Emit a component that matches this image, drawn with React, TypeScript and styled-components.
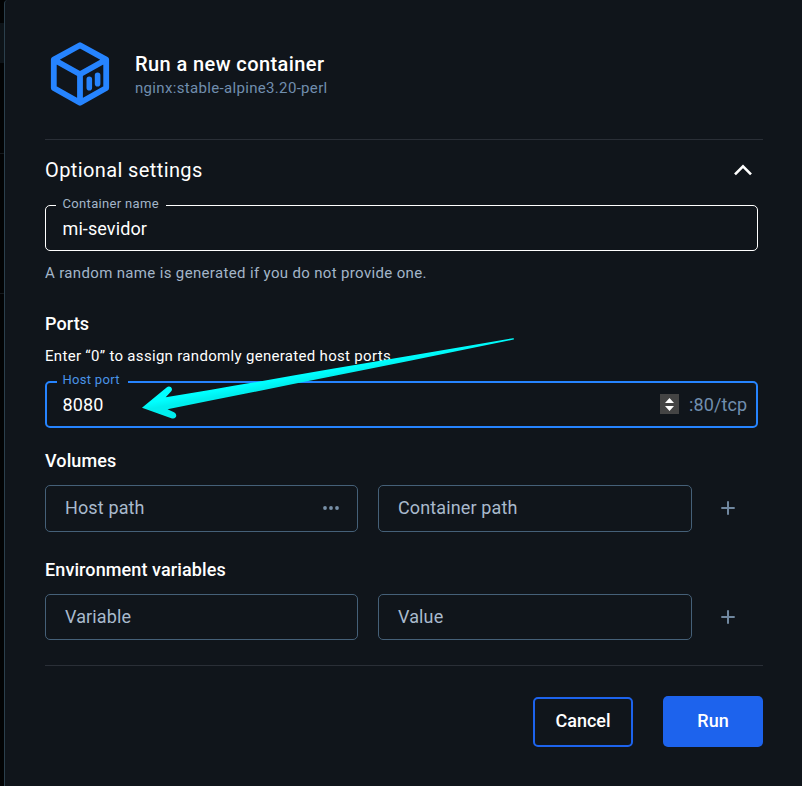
import React from "react";
import styled, { createGlobalStyle } from "styled-components";

const GlobalStyle = createGlobalStyle`
  * { box-sizing: border-box; }
  body { margin: 0; background: #000; overflow: hidden; }
  button, input { font: inherit; letter-spacing: inherit; }
`;

const Screen = styled.div`
  display: flex;
  width: 802px;
  height: 786px;
  background: #020304;
  font-family: Roboto, "Liberation Sans", sans-serif;
  color: #fff;
`;

const Backdrop = styled.div`
  width: 4px;
  padding-top: 23px;
`;

const BackdropRow = styled.div`
  height: 40px;
  background: #0d1318;
`;

const BackdropLine = styled.div<{ $gap: number }>`
  height: 1px;
  margin-top: ${(p) => p.$gap}px;
  background: #14181c;
`;

const Dialog = styled.main`
  position: relative;
  flex: 1;
  padding: 0 39px 0 40px;
  border-left: 1px solid #2b3f4c;
  border-top-left-radius: 4px;
  background: #10151b;
`;

const Header = styled.header`
  display: flex;
  height: 140px;
  padding-top: 39px;
  border-bottom: 1px solid #2a2f37;
`;

const LogoIcon = styled.svg`
  width: 70px;
  height: 70px;
  flex: none;
`;

const HeaderText = styled.div`
  padding: 12px 0 0 20px;
`;

const Title = styled.h1`
  margin: 0;
  font-size: 20px;
  font-weight: 500;
  line-height: 26px;
  letter-spacing: 0.41px;
`;

const Subtitle = styled.div`
  font-size: 15px;
  line-height: 22px;
  letter-spacing: 0.33px;
  color: #708eae;
`;

const SettingsToggle = styled.button`
  display: flex;
  align-items: center;
  justify-content: space-between;
  width: 100%;
  height: 65px;
  padding: 0 10px 5px 0;
  border: 0;
  background: none;
  color: #fff;
  font-size: 20px;
  letter-spacing: 0.39px;
`;

const Field = styled.label<{ $focused?: boolean }>`
  position: relative;
  display: flex;
  align-items: center;
  width: 713px;
  height: ${(p) => (p.$focused ? 47 : 46)}px;
  padding: ${(p) => (p.$focused ? "0 9px 0 15.5px" : "1px 16px 0 16.5px")};
  border: ${(p) => (p.$focused ? "2px solid #2684ff" : "1px solid #fff")};
  border-radius: 5px;
  font-size: 18px;
  letter-spacing: 0.1px;
`;

const FieldLabel = styled.span<{ $focused?: boolean }>`
  position: absolute;
  top: ${(p) => (p.$focused ? -12 : -11)}px;
  left: 10px;
  padding: ${(p) => (p.$focused ? "0 8px 0 5.5px" : "0 7px 0 6.5px")};
  background: #10151b;
  font-size: 13px;
  line-height: 18px;
  letter-spacing: ${(p) => (p.$focused ? 0.3 : 0.33)}px;
  color: ${(p) => (p.$focused ? "#4a94e8" : "#a3b5c9")};
`;

const FieldInput = styled.input`
  flex: 1;
  min-width: 0;
  padding: 0;
  border: 0;
  outline: 0;
  background: none;
  color: #fff;
`;

const Stepper = styled.span`
  display: flex;
  flex-direction: column;
  align-items: center;
  justify-content: center;
  width: 19px;
  height: 20px;
  margin: 0 10px 1px 0;
  background: #444;
`;

const PortSuffix = styled.span`
  width: 58px;
  letter-spacing: 0.1px;
  font-size: 18px;
  color: #708eae;
`;

const Helper = styled.p`
  margin: 13px 0 0;
  font-size: 15px;
  line-height: 18px;
  letter-spacing: 0.345px;
  color: #a3b5c9;
`;

const SectionTitle = styled.h2<{ $gap: number }>`
  margin: ${(p) => p.$gap}px 0 0;
  font-size: 18px;
  font-weight: 500;
  line-height: 22px;
  letter-spacing: 0.1px;
`;

const Hint = styled.p`
  margin: 12px 0 16px;
  font-size: 15px;
  line-height: 18px;
  letter-spacing: 0.31px;
`;

const PairRow = styled.div<{ $height: number }>`
  display: grid;
  grid-template-columns: 313px 314px 31px;
  column-gap: 20px;
  height: ${(p) => p.$height}px;
  margin-top: 13px;
`;

const PairField = styled.div`
  display: flex;
  align-items: center;
  justify-content: space-between;
  padding: 0 17px 2px 19px;
  border: 1px solid #456078;
  border-radius: 5px;
  font-size: 18px;
  letter-spacing: 0.13px;
  color: #a9bacd;
`;

const AddButton = styled.button`
  display: flex;
  align-items: center;
  justify-content: center;
  padding: 0 0 1px;
  border: 0;
  background: none;
`;

const Footer = styled.footer`
  display: flex;
  justify-content: flex-end;
  align-items: flex-end;
  gap: 30px;
  height: 82px;
  margin-top: 25px;
  border-top: 1px solid #2a2f37;
`;

const ActionButton = styled.button<{ $primary?: boolean }>`
  width: 100px;
  height: ${(p) => (p.$primary ? 51 : 50)}px;
  padding: 0 0 ${(p) => (p.$primary ? 3 : 4)}px;
  border: ${(p) => (p.$primary ? "0" : "2px solid #1d63ed")};
  border-radius: 5px;
  background: ${(p) => (p.$primary ? "#1d63ed" : "transparent")};
  color: #fff;
  font-size: 18px;
  font-weight: 500;
`;

const Pointer = styled.svg`
  position: absolute;
  top: 330px;
  left: 130px;
  width: 390px;
  height: 96px;
  pointer-events: none;
`;

const ContainerLogo = () => (
  <LogoIcon viewBox="0 0 70 70" fill="none" stroke="#2684ff" strokeLinejoin="round" strokeLinecap="round">
    <path strokeWidth="5.8" d="M35 6.2 61.2 20.6V48.9L35 63.8 8.8 48.9V20.6ZM9 20.8 35 35.2 61 20.8M35 35.2V63" />
    <path strokeWidth="5.6" d="M44.3 40.2V48.8M52.6 36.2V44.8" />
  </LogoIcon>
);

const ChevronUp = () => (
  <svg width="20" height="14" viewBox="0 0 20 14" fill="none" stroke="#fff" strokeWidth="2.6">
    <path d="M2 11.4 10 3.3 18 11.4" />
  </svg>
);

const Plus = () => (
  <svg width="14" height="14" viewBox="0 0 14 14" stroke="#70879f" strokeWidth="2">
    <path d="M7 0.3V13.7M0.3 7H13.7" />
  </svg>
);

const Ellipsis = () => (
  <svg width="18" height="6" viewBox="0 0 18 6" fill="#7890a8">
    <circle cx="3" cy="3" r="1.9" />
    <circle cx="9" cy="3" r="1.9" />
    <circle cx="15" cy="3" r="1.9" />
  </svg>
);

const StepArrows = () => (
  <svg width="19" height="20" viewBox="0 0 19 20" fill="#fff">
    <path d="M5 9 9.5 4 14 9ZM5 12H14L9.5 17Z" />
  </svg>
);

function PairSection({ height, names, browse }: { height: number; names: [string, string]; browse?: boolean }) {
  return (
    <PairRow $height={height}>
      <PairField>
        {names[0]}
        {browse && <Ellipsis />}
      </PairField>
      <PairField>{names[1]}</PairField>
      <AddButton aria-label="Add">
        <Plus />
      </AddButton>
    </PairRow>
  );
}

export default function App() {
  return (
    <Screen>
      <GlobalStyle />
      <Backdrop>
        <BackdropRow />
        <BackdropLine $gap={90} />
        <BackdropLine $gap={139} />
      </Backdrop>
      <Dialog>
        <Header>
          <ContainerLogo />
          <HeaderText>
            <Title>Run a new container</Title>
            <Subtitle>nginx:stable-alpine3.20-perl</Subtitle>
          </HeaderText>
        </Header>
        <SettingsToggle>
          Optional settings
          <ChevronUp />
        </SettingsToggle>
        <Field>
          <FieldLabel>Container name</FieldLabel>
          <FieldInput defaultValue="mi-sevidor" />
        </Field>
        <Helper>A random name is generated if you do not provide one.</Helper>
        <SectionTitle $gap={31}>Ports</SectionTitle>
        <Hint>Enter “0” to assign randomly generated host ports.</Hint>
        <Field $focused>
          <FieldLabel $focused>Host port</FieldLabel>
          <FieldInput defaultValue="8080" />
          <Stepper>
            <StepArrows />
          </Stepper>
          <PortSuffix>:80/tcp</PortSuffix>
        </Field>
        <SectionTitle $gap={22}>Volumes</SectionTitle>
        <PairSection height={47} names={["Host path", "Container path"]} browse />
        <SectionTitle $gap={27}>Environment variables</SectionTitle>
        <PairSection height={46} names={["Variable", "Value"]} />
        <Footer>
          <ActionButton>Cancel</ActionButton>
          <ActionButton $primary>Run</ActionButton>
        </Footer>
        <Pointer viewBox="135 330 390 96">
          <defs>
            <linearGradient id="beam" gradientUnits="userSpaceOnUse" x1="240" y1="382" x2="242.5" y2="396">
              <stop offset="0.3" stopColor="#00ffff" />
              <stop offset="0.75" stopColor="#00eeee" />
            </linearGradient>
          </defs>
          <path
            fill="url(#beam)"
            d="M142 407.8 166.6 387.4C170 384.8 173.8 388.7 171 391.6L165.7 397.3C250 383.5 330 369 410 355.8L513 338.2Q515 338.3 513.5 339.6L410 360.8C330 377 250 392.5 167.5 409.2L174 412.3C178.3 414.8 175.8 419.6 172 418.4Z"
          />
        </Pointer>
      </Dialog>
    </Screen>
  );
}
